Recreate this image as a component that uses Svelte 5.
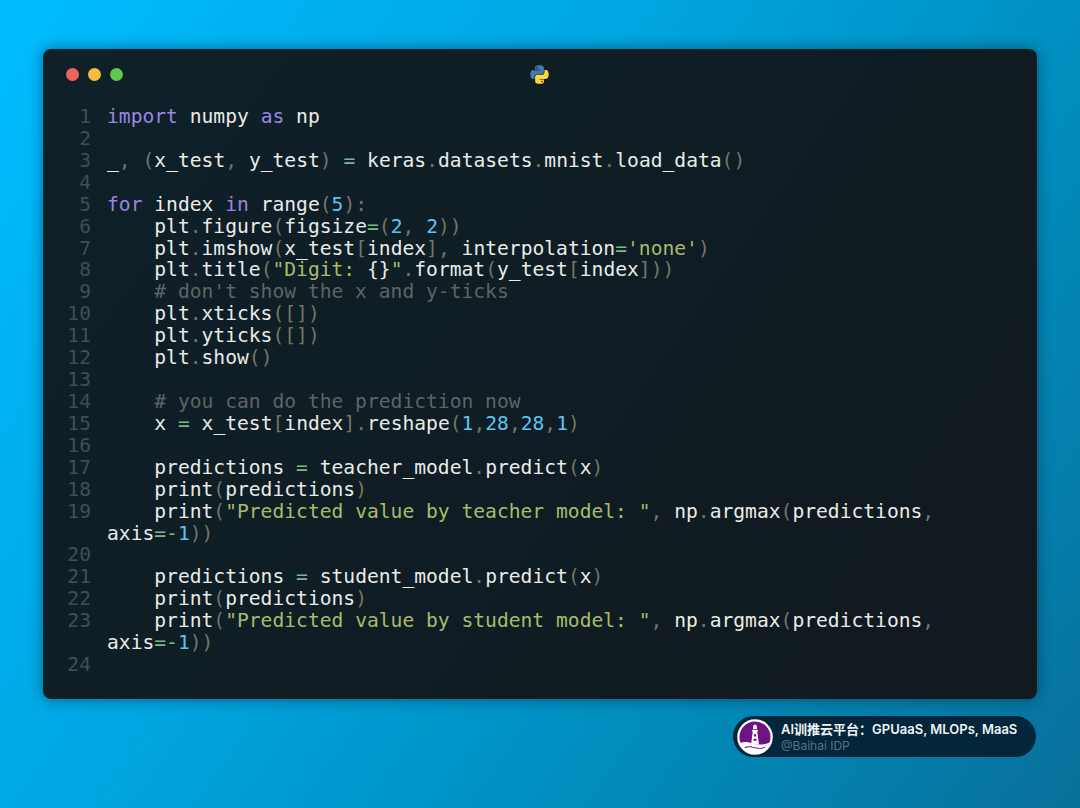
<script lang="ts">
  const source = `import numpy as np

_, (x_test, y_test) = keras.datasets.mnist.load_data()

for index in range(5):
    plt.figure(figsize=(2, 2))
    plt.imshow(x_test[index], interpolation='none')
    plt.title("Digit: {}".format(y_test[index]))
    # don't show the x and y-ticks
    plt.xticks([])
    plt.yticks([])
    plt.show()

    # you can do the prediction now
    x = x_test[index].reshape(1,28,28,1)

    predictions = teacher_model.predict(x)
    print(predictions)
    print("Predicted value by teacher model: ", np.argmax(predictions, axis=-1))

    predictions = student_model.predict(x)
    print(predictions)
    print("Predicted value by student model: ", np.argmax(predictions, axis=-1))
`;

  const pattern = /(#.*$)|("Digit: |"Predicted[^"]*"|'[^']*'|(?<=\})")|(\b(?:import|as|for|in)\b)|(\b\d+\b)|([.,()[\]:])|([=-])|([^#"'.,()[\]:=-]+?(?=\b|\s|$|[#"'.,()[\]:=-])|\S)/g;

  function tokenize(line: string) {
    const tokens: { kind: string; text: string }[] = [];
    for (const m of line.matchAll(pattern)) {
      const kind = m[1] ? "comment" : m[2] ? "string" : m[3] ? "keyword" : m[4] ? "number" : m[5] ? "punct" : m[6] ? "op" : "plain";
      tokens.push({ kind, text: m[0] });
    }
    return tokens;
  }

  const rows = source.split("\n").map((line) => {
    const indent = line.match(/^ */)![0];
    return { indent, tokens: tokenize(line.slice(indent.length)) };
  });
</script>

<main class="page">
  <section class="window">
    <header class="titlebar">
      <div class="dots">
        <span class="dot red"></span>
        <span class="dot yellow"></span>
        <span class="dot green"></span>
      </div>
      <svg class="python" viewBox="0 0 24 24" aria-label="Python">
        <path fill="#3f7cae" d="M11.9 1.5c-5.3 0-5 2.3-5 2.3v2.5H12V7H4.9S1.5 6.6 1.5 12s3 5.2 3 5.2h1.8v-2.5s-.1-3 2.9-3h5c.1 0 2.8 0 2.8-2.7V4.4s.4-2.9-5.1-2.9zM9.1 3.1a.9.9 0 1 1 0 1.8.9.9 0 0 1 0-1.8z" />
        <path fill="#ffd443" transform="rotate(180 12 12)" d="M11.9 1.5c-5.3 0-5 2.3-5 2.3v2.5H12V7H4.9S1.5 6.6 1.5 12s3 5.2 3 5.2h1.8v-2.5s-.1-3 2.9-3h5c.1 0 2.8 0 2.8-2.7V4.4s.4-2.9-5.1-2.9zM9.1 3.1a.9.9 0 1 1 0 1.8.9.9 0 0 1 0-1.8z" />
      </svg>
    </header>
    <div class="code">
      {#each rows as row, i}
        <div class="row">
          <span class="num">{i + 1}</span>
          <span class="text">{row.indent}{#each row.tokens as t}<span class={t.kind}>{t.text}</span>{/each}</span>
        </div>
      {/each}
    </div>
  </section>

  <aside class="badge">
    <svg class="logo" viewBox="0 0 40 40" aria-hidden="true">
      <circle cx="20" cy="20" r="18.500" fill="#6d1384" stroke="#fff" stroke-width="2.500" />
      <path fill="#fff" d="M18.800 6.500h2.400l1 2.200v2.600h-4.400V8.700zM16.700 12.300h6.600v1.200h-.8l1.900 15h-8.800l1.900-15h-.8z" />
      <path fill="#6d1384" d="M18.700 17h2.600v2.400h-2.600zM18.300 22h3.400v2.200h-3.400z" />
      <path fill="#fff" d="M2.800 27c5-2.400 9.800-1.800 13.800 0 5 2.200 13 2 20.600-1.300C34.400 33.500 27.500 38 20 38 12.500 38 5.600 33.500 2.800 27z" />
      <path fill="#6d1384" d="M8 31.200c5-2 9-.6 13 .4 4 1 8 .6 11-1l-.8 1.300c-3 1.500-7.200 1.600-11 .7-4-1-7-1.800-11.200-.3z" />
    </svg>
    <div class="badge-text">
      <strong>AI训推云平台：GPUaaS, MLOPs, MaaS</strong>
      <span>@Baihai IDP</span>
    </div>
  </aside>
</main>

<style>
  :global(body) {
    margin: 0;
  }

  .page {
    box-sizing: border-box;
    height: 808px;
    padding: 49px 43px 0;
    overflow: hidden;
    background: linear-gradient(125deg, #00bcff 0%, #00a6e2 38%, #0090c2 65%, #08709a 100%);
  }

  .window {
    height: 650px;
    border-radius: 8px;
    background: linear-gradient(125deg, #0f2029, #10191e);
    box-shadow: 0 0 14px rgba(0, 25, 45, 0.5);
  }

  .titlebar {
    position: relative;
    height: 57px;
  }

  .dots {
    display: flex;
    gap: 9px;
    padding: 19px 0 0 23px;
  }

  .dot {
    width: 13px;
    height: 13px;
    border-radius: 50%;
  }

  .red {
    background: #f0625a;
  }

  .yellow {
    background: #f5bb43;
  }

  .green {
    background: #5ec84e;
  }

  .python {
    position: absolute;
    top: 15px;
    left: 486px;
    width: 21px;
    height: 21px;
  }

  .code {
    padding: 0 40px 0 21px;
    font-family: "DejaVu Sans Mono", "Liberation Mono", monospace;
    font-size: 19.64px;
    line-height: 21.92px;
    color: #e9ebe8;
  }

  .row {
    display: grid;
    grid-template-columns: 27px 1fr;
    column-gap: 16px;
    min-height: 21.92px;
  }

  .num {
    text-align: right;
    color: #3f4e55;
  }

  .text {
    white-space: pre-wrap;
  }

  .comment {
    color: #5f6463;
  }

  .string {
    color: #a8bb6c;
  }

  .keyword {
    color: #9a85e2;
  }

  .number {
    color: #5cc5ef;
  }

  .punct {
    color: #737665;
  }

  .op {
    color: #7db88a;
  }

  .badge {
    display: flex;
    align-items: center;
    gap: 8px;
    box-sizing: border-box;
    width: 303px;
    height: 41px;
    margin: 17px 0 0 690px;
    padding: 0 0 0 4px;
    border-radius: 21px;
    background: #03263a;
  }

  .logo {
    flex: none;
    width: 36px;
    height: 36px;
  }

  .badge-text {
    display: flex;
    flex-direction: column;
    font-family: Inter, "Noto Sans CJK SC", sans-serif;
    white-space: nowrap;
  }

  .badge-text strong {
    font-size: 13px;
    line-height: 17px;
    font-weight: 600;
    color: #eef3f5;
  }

  .badge-text span {
    font-size: 12px;
    line-height: 15px;
    color: #587280;
  }
</style>
